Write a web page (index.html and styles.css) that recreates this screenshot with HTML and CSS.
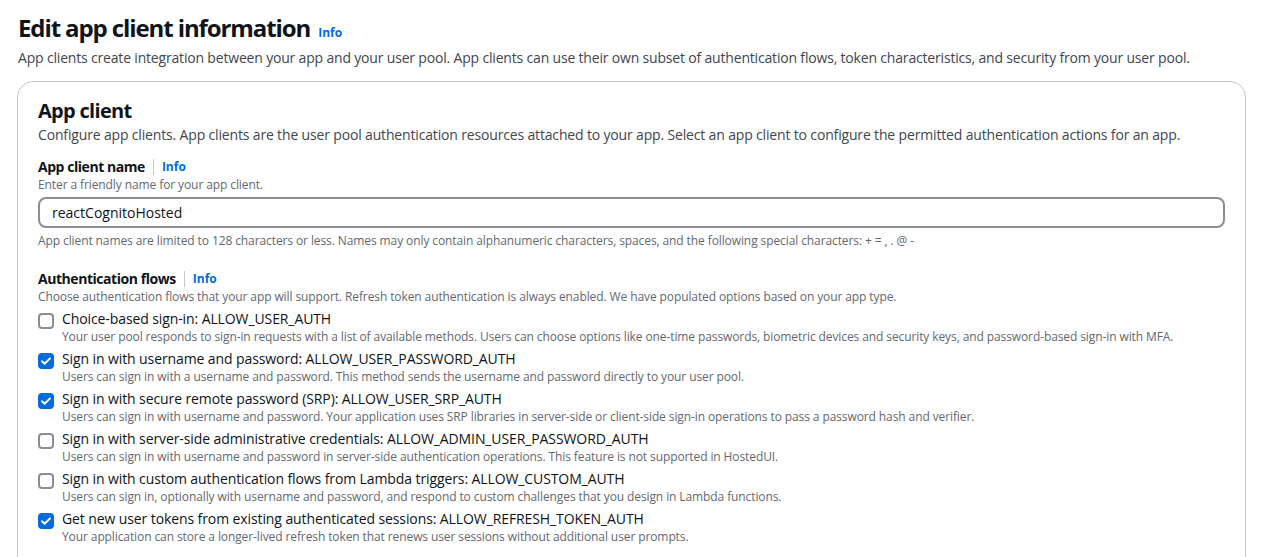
FILE: index.html
```html
<!DOCTYPE html>
<html>
<head>
<meta charset="utf-8">
<link rel="stylesheet" href="styles.css">
</head>
<body>
<div class="page">
  <header class="page-head">
    <h1 class="title">Edit app client information <a class="info info-lg">Info</a></h1>
    <p class="subtitle">App clients create integration between your app and your user pool. App clients can use their own subset of authentication flows, token characteristics, and security from your user pool.</p>
  </header>
  <section class="card">
    <h2 class="card-title">App client</h2>
    <p class="card-desc">Configure app clients. App clients are the user pool authentication resources attached to your app. Select an app client to configure the permitted authentication actions for an app.</p>

    <div class="field">
      <div class="label-row"><span class="label">App client name</span><span class="sep"></span><a class="info">Info</a></div>
      <div class="hint">Enter a friendly name for your app client.</div>
      <div class="input">reactCognitoHosted</div>
      <div class="constraint">App client names are limited to 128 characters or less. Names may only contain alphanumeric characters, spaces, and the following special characters: + = , . @ -</div>
    </div>

    <div class="field field-flows">
      <div class="label-row"><span class="label">Authentication flows</span><span class="sep"></span><a class="info">Info</a></div>
      <div class="hint">Choose authentication flows that your app will support. Refresh token authentication is always enabled. We have populated options based on your app type.</div>
      <div class="options">
        <div class="opt">
          <span class="cb"></span>
          <div class="opt-text"><div class="opt-label">Choice-based sign-in: ALLOW_USER_AUTH</div><div class="opt-desc">Your user pool responds to sign-in requests with a list of available methods. Users can choose options like one-time passwords, biometric devices and security keys, and password-based sign-in with MFA.</div></div>
        </div>
        <div class="opt">
          <span class="cb on"><svg viewBox="0 0 16 16" width="16" height="16"><path d="M4 8.2l2.7 2.6L12 5.4" fill="none" stroke="#fff" stroke-width="2" stroke-linecap="round" stroke-linejoin="round"/></svg></span>
          <div class="opt-text"><div class="opt-label">Sign in with username and password: ALLOW_USER_PASSWORD_AUTH</div><div class="opt-desc">Users can sign in with a username and password. This method sends the username and password directly to your user pool.</div></div>
        </div>
        <div class="opt">
          <span class="cb on"><svg viewBox="0 0 16 16" width="16" height="16"><path d="M4 8.2l2.7 2.6L12 5.4" fill="none" stroke="#fff" stroke-width="2" stroke-linecap="round" stroke-linejoin="round"/></svg></span>
          <div class="opt-text"><div class="opt-label">Sign in with secure remote password (SRP): ALLOW_USER_SRP_AUTH</div><div class="opt-desc">Users can sign in with username and password. Your application uses SRP libraries in server-side or client-side sign-in operations to pass a password hash and verifier.</div></div>
        </div>
        <div class="opt">
          <span class="cb"></span>
          <div class="opt-text"><div class="opt-label">Sign in with server-side administrative credentials: ALLOW_ADMIN_USER_PASSWORD_AUTH</div><div class="opt-desc">Users can sign in with username and password in server-side authentication operations. This feature is not supported in HostedUI.</div></div>
        </div>
        <div class="opt">
          <span class="cb"></span>
          <div class="opt-text"><div class="opt-label">Sign in with custom authentication flows from Lambda triggers: ALLOW_CUSTOM_AUTH</div><div class="opt-desc">Users can sign in, optionally with username and password, and respond to custom challenges that you design in Lambda functions.</div></div>
        </div>
        <div class="opt">
          <span class="cb on"><svg viewBox="0 0 16 16" width="16" height="16"><path d="M4 8.2l2.7 2.6L12 5.4" fill="none" stroke="#fff" stroke-width="2" stroke-linecap="round" stroke-linejoin="round"/></svg></span>
          <div class="opt-text"><div class="opt-label">Get new user tokens from existing authenticated sessions: ALLOW_REFRESH_TOKEN_AUTH</div><div class="opt-desc">Your application can store a longer-lived refresh token that renews user sessions without additional user prompts.</div></div>
        </div>
      </div>
    </div>
  </section>
</div>
</body>
</html>
```

FILE: styles.css
```css
* { box-sizing: border-box; }
html, body { margin: 0; padding: 0; background: #fff; }
body {
  font-family: "Open Sans", "Noto Sans", sans-serif;
  color: #0f141a;
  overflow: hidden;
}
.page { padding: 13px 16px 0 17px; }
.page-head { padding-left: 1px; }
.title {
  margin: 0;
  font-size: 24px;
  line-height: 30px;
  font-weight: 700;
  letter-spacing: -1.1px;
  display: flex;
  align-items: baseline;
  gap: 8px;
}
.info {
  color: #006ce0;
  font-weight: 700;
  font-size: 12px;
  letter-spacing: 0;
  text-decoration: none;
}
.subtitle {
  margin: 0;
  font-size: 14px;
  line-height: 20px;
  color: #424650;
  letter-spacing: -0.18px;
}
.card {
  margin-top: 13px;
  border: 1px solid #c6c6cd;
  border-radius: 16px;
  padding: 17px 20px 20px 20px;
  height: 600px;
}
.card-title {
  margin: 0;
  font-size: 20px;
  line-height: 24px;
  font-weight: 700;
  letter-spacing: -0.7px;
}
.card-desc {
  margin: 0;
  font-size: 14px;
  line-height: 24px;
  color: #424650;
  letter-spacing: -0.16px;
}
.field { margin-top: 9px; }
.field-flows { margin-top: 19px; }
.label-row {
  display: flex;
  align-items: center;
  height: 21px;
}
.label { font-size: 14px; font-weight: 700; letter-spacing: -0.45px; }
.sep { width: 1px; height: 16px; background: #c6c6cd; margin: 0 8px; }
.hint { font-size: 12px; line-height: 16px; color: #656871; letter-spacing: -0.1px; }
.input {
  margin-top: 4px;
  height: 31px;
  border: 2px solid #8c8c94;
  border-radius: 8px;
  padding: 0 12px;
  font-size: 14px;
  line-height: 28px;
}
.constraint { margin-top: 5px; font-size: 12px; line-height: 16px; color: #656871; letter-spacing: -0.1px; }
.options { margin-top: 2px; display: flex; flex-direction: column; }
.opt { display: flex; gap: 8px; height: 40px; }
.cb {
  flex: 0 0 16px;
  width: 16px; height: 16px;
  margin-top: 6px;
  border: 2px solid #8c8c94;
  border-radius: 4px;
  display: flex;
  align-items: center;
  justify-content: center;
}
.cb.on { background: #006ce0; border-color: #006ce0; }
.cb svg { flex: none; margin: -2px; }
.opt-label { font-size: 14px; line-height: 20px; margin-top: 2px; letter-spacing: -0.1px; }
.opt-desc { font-size: 12px; line-height: 16px; color: #656871; letter-spacing: -0.1px; }
```
